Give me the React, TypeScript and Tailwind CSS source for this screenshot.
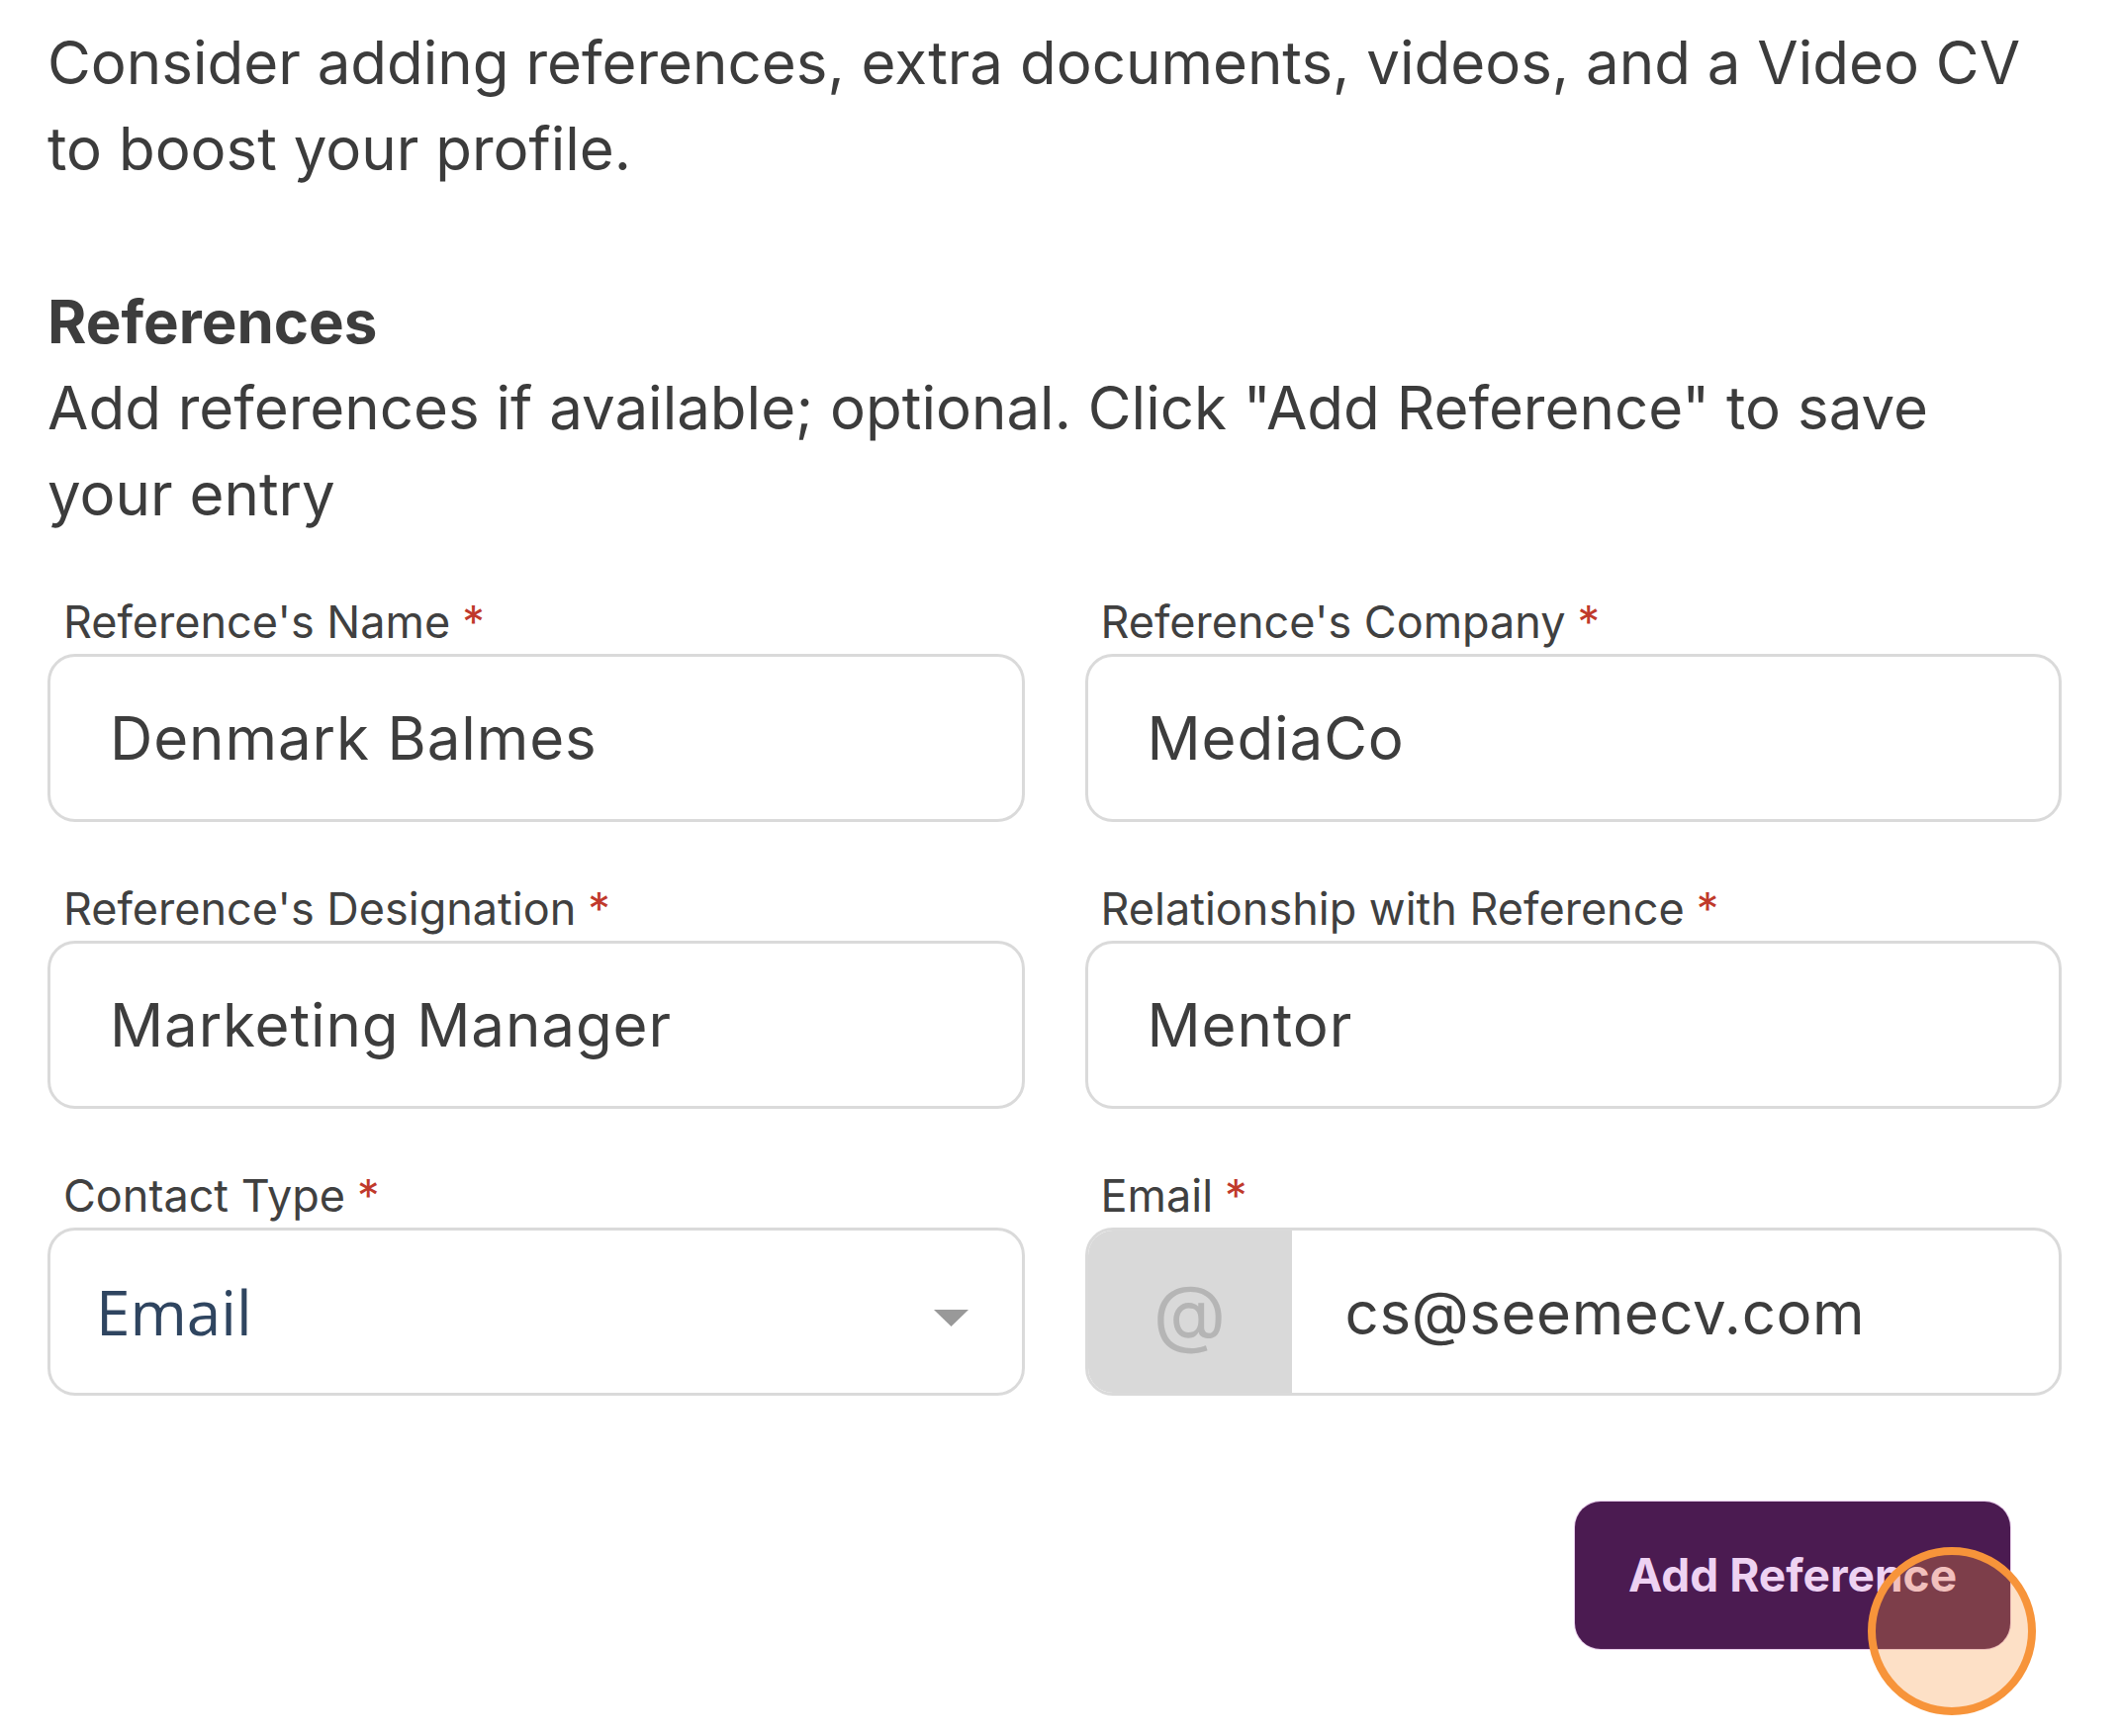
import React from "react";

// ── Palette ─────────────────────────────────────────────
// #3c3c3c body text | #dadada field border | #4b1b51 button purple
// #eed2f2 button text | #f7943a click marker

const Req = () => <span className="ml-[12px] text-[#c0392b]">*</span>;

const Label: React.FC<{ children: React.ReactNode }> = ({ children }) => (
  <div className="mb-[6px] pl-[16px] text-[45px] leading-[52px] text-[#404040]">
    {children}
    <Req />
  </div>
);

const TextBox: React.FC<{ value: string }> = ({ value }) => (
  <div className="flex h-[170px] items-center rounded-[28px] border-[3px] border-[#dadada] bg-white px-[60px] text-[60px] tracking-[0.015em] text-[#3d3d3d]">
    {value}
  </div>
);

const Field: React.FC<{ label: string; children: React.ReactNode }> = ({ label, children }) => (
  <div className="flex flex-col">
    <Label>{label}</Label>
    {children}
  </div>
);

export default function App() {
  return (
    <div className="min-h-screen bg-white pl-[48px] pr-[61px] pt-[20px] font-['Inter','Noto_Sans',sans-serif] text-[#3c3c3c]">
      {/* intro */}
      <p className="text-[60px] leading-[87px]">
        Consider adding references, extra documents, videos, and a Video CV to boost your profile.
      </p>

      {/* section header */}
      <h2 className="mt-[88px] text-[60px] font-bold leading-[87px] text-[#3d3d3d]">References</h2>
      <p className="text-[60px] leading-[87px]">
        Add references if available; optional. Click "Add Reference" to save your entry
      </p>

      {/* form */}
      <div className="mt-[60px] grid grid-cols-2 gap-x-[61px] gap-y-[62px]">
        <Field label="Reference's Name">
          <TextBox value="Denmark Balmes" />
        </Field>
        <Field label="Reference's Company">
          <TextBox value="MediaCo" />
        </Field>
        <Field label="Reference's Designation">
          <TextBox value="Marketing Manager" />
        </Field>
        <Field label="Relationship with Reference">
          <TextBox value="Mentor" />
        </Field>

        <Field label="Contact Type">
          <div className="flex h-[170px] items-center justify-between rounded-[28px] border-[3px] border-[#dadada] bg-white pl-[46px] pr-[54px]">
            <span className="font-['Open_Sans',sans-serif] text-[62px] text-[#2f4560]">Email</span>
            <svg viewBox="0 0 35 17" className="mt-[12px] h-[17px] w-[35px]" fill="#999999">
              <path d="M0 0 L35 0 L17.5 17 Z" />
            </svg>
          </div>
        </Field>

        <Field label="Email">
          <div className="flex h-[170px] overflow-hidden rounded-[28px] border-[3px] border-[#dadada] bg-white">
            <div className="flex w-[206px] shrink-0 items-center justify-center bg-[#d9d9d9] text-[76px] text-[#b5b5b5]">
              @
            </div>
            <div className="mt-[2px] flex items-center pl-[54px] text-[60px] tracking-[0.01em] text-[#3d3d3d]">
              cs@seemecv.com
            </div>
          </div>
        </Field>
      </div>

      {/* action */}
      <div className="mt-[107px] flex justify-end pr-[52px]">
        <div className="relative">
          <button className="h-[149px] w-[440px] rounded-[26px] bg-[#4b1b51] text-[46px] font-bold text-[#eed2f2] shadow-[0_0_0_1px_#e6cbe9]">
            Add Reference
          </button>
          {/* click marker */}
          <div className="pointer-events-none absolute left-[296px] top-[46px] h-[170px] w-[170px] rounded-full border-[8px] border-[#f7943a] bg-[#f7953a4a]" />
        </div>
      </div>
    </div>
  );
}
